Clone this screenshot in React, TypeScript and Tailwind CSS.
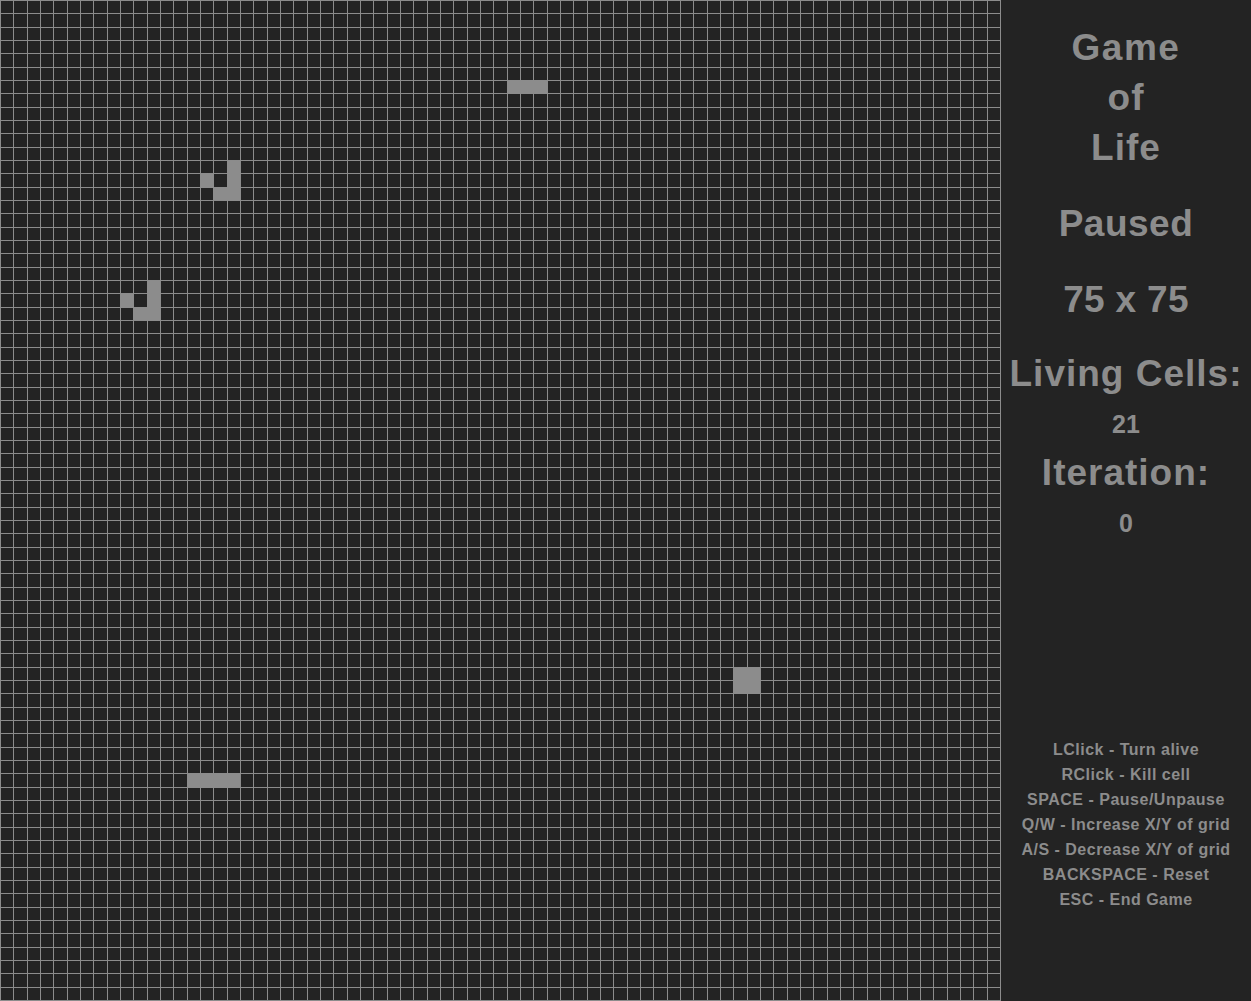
import React from "react";

const N = 75;
const SIZE = 1000;
const pos = (k: number) => Math.round((k * SIZE) / N);

const alive: [number, number][] = [
  // glider 1
  [17, 12], [15, 13], [17, 13], [16, 14], [17, 14],
  // glider 2
  [11, 21], [9, 22], [11, 22], [10, 23], [11, 23],
  // top blinker
  [38, 6], [39, 6], [40, 6],
  // block
  [55, 50], [56, 50], [55, 51], [56, 51],
  // bottom line
  [14, 58], [15, 58], [16, 58], [17, 58],
];

function Board() {
  const lines: React.ReactNode[] = [];
  for (let k = 0; k <= N; k++) {
    const p = pos(k);
    lines.push(<rect key={"v" + k} x={p} y={0} width={1} height={SIZE + 1} />);
    lines.push(<rect key={"h" + k} x={0} y={p} width={SIZE + 1} height={1} />);
  }
  return (
    <svg
      width={SIZE + 1}
      height={SIZE + 1}
      viewBox={`0 0 ${SIZE + 1} ${SIZE + 1}`}
      shapeRendering="crispEdges"
      className="block shrink-0"
    >
      <rect x={0} y={0} width={SIZE + 1} height={SIZE + 1} fill="#232323" />
      <g fill="#8c8c8c">{lines}</g>
      <g fill="#8c8c8c">
        {alive.map(([c, r], i) => (
          <rect
            key={i}
            x={pos(c)}
            y={pos(r)}
            width={pos(c + 1) - pos(c) + 1}
            height={pos(r + 1) - pos(r) + 1}
          />
        ))}
      </g>
    </svg>
  );
}

const big = "text-[37px] leading-[50px] font-bold";
const mid = "text-[25px] leading-[25px] font-bold";

export default function App() {
  return (
    <div
      className="flex h-[1001px] w-[1251px] overflow-hidden bg-[#232323] text-[#8c8c8c]"
      style={{ fontFamily: '"Liberation Sans", Arial, sans-serif' }}
    >
      <Board />
      <div className="flex flex-1 flex-col items-center pt-[23px] text-center">
        <div className={`${big} tracking-[1.5px]`}>Game</div>
        <div className={`${big} tracking-[1px]`}>of</div>
        <div className={`${big} tracking-[1px]`}>Life</div>
        <div className={`${big} mt-[26px] tracking-[0.5px]`}>Paused</div>
        <div className={`${big} mt-[26px] tracking-[0.3px]`}>75 x 75</div>
        <div className={`${big} mt-[24px] tracking-[1px]`}>Living Cells:</div>
        <div className={`${mid} mt-[13px]`}>21</div>
        <div className={`${big} mt-[11px] tracking-[1px]`}>Iteration:</div>
        <div className={`${mid} mt-[13px]`}>0</div>
        <div className="mt-[201px] flex flex-col items-center text-[16px] leading-[25px] font-bold tracking-[0.5px]">
          <div>LClick - Turn alive</div>
          <div>RClick - Kill cell</div>
          <div>SPACE - Pause/Unpause</div>
          <div>Q/W - Increase X/Y of grid</div>
          <div>A/S - Decrease X/Y of grid</div>
          <div>BACKSPACE - Reset</div>
          <div>ESC - End Game</div>
        </div>
      </div>
    </div>
  );
}
